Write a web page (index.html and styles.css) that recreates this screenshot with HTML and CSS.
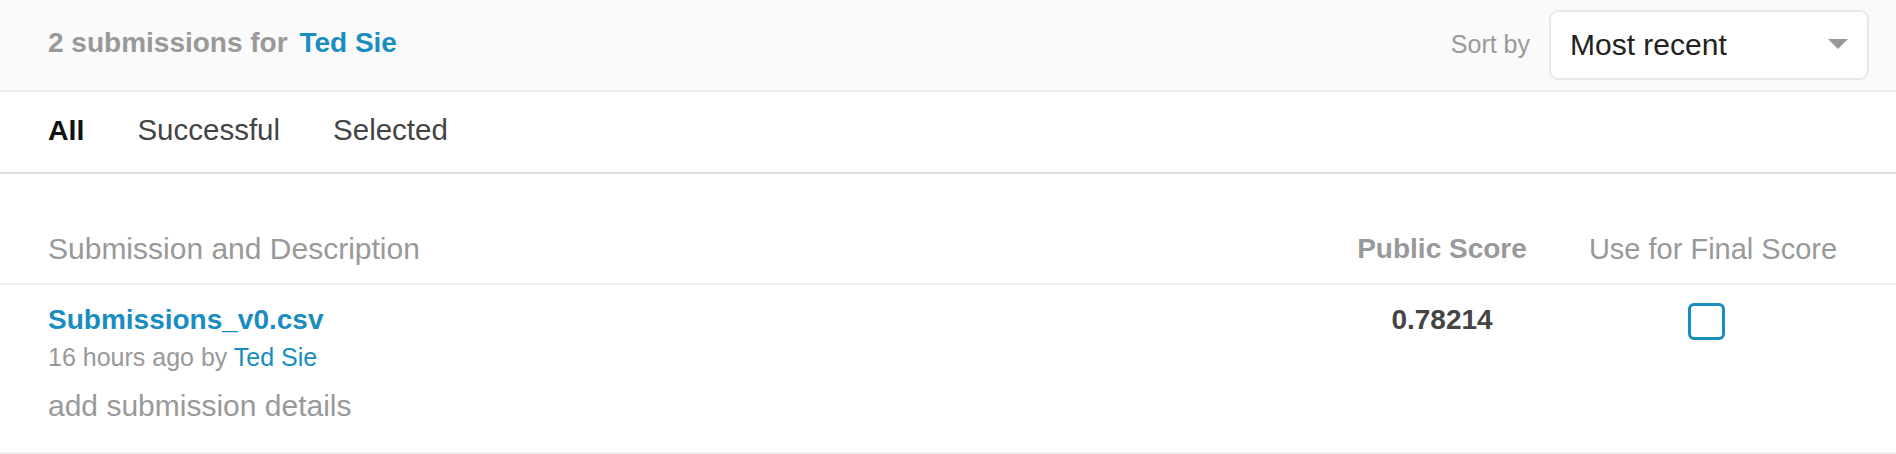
FILE: index.html
```html
<!DOCTYPE html>
<html lang="en">
<head>
<meta charset="utf-8">
<title>Submissions</title>
<link rel="stylesheet" href="styles.css">
</head>
<body>
<header class="sub-header">
  <h1 class="sub-title">2 submissions for <a class="user-link" href="#">Ted Sie</a></h1>
  <div class="sort">
    <span class="sort-label">Sort by</span>
    <div class="select">
      <span class="select-value">Most recent</span>
      <span class="caret"></span>
    </div>
  </div>
</header>
<nav class="tabs">
  <a class="tab tab-active" href="#">All</a>
  <a class="tab" href="#">Successful</a>
  <a class="tab" href="#">Selected</a>
</nav>
<section class="table">
  <div class="row row-head">
    <div class="col-desc">Submission and Description</div>
    <div class="col-score col-score-head">Public Score</div>
    <div class="col-final">Use for Final Score</div>
  </div>
  <div class="row row-item">
    <div class="col-desc">
      <a class="file-link" href="#">Submissions_v0.csv</a>
      <div class="meta">16 hours ago by <a class="user-link-plain" href="#">Ted Sie</a></div>
      <div class="details">add submission details</div>
    </div>
    <div class="col-score score-value">0.78214</div>
    <div class="col-final"><span class="checkbox"></span></div>
  </div>
</section>
</body>
</html>
```
FILE: styles.css
```css
* { box-sizing: border-box; }
html, body { margin: 0; padding: 0; background: #fff; }
body { font-family: "Liberation Sans", Arial, sans-serif; color: #444; }
a { text-decoration: none; }

.sub-header {
  height: 92px;
  background: #fafafa;
  border-bottom: 2px solid #ebebeb;
  display: flex;
  align-items: center;
  justify-content: space-between;
  padding: 0 27px 4px 48px;
}
.sub-title {
  margin: 0;
  font-size: 28px;
  font-weight: 700;
  color: #999;
  line-height: 32px;
}
.user-link { color: #1a8dc0; margin-left: 4px; }
.sort { display: flex; align-items: center; gap: 19px; }
.sort-label { font-size: 25px; color: #999; line-height: 30px; padding-top: 2px; }
.select {
  width: 320px;
  height: 70px;
  background: #fff;
  border: 2px solid #e8e8e8;
  border-radius: 9px;
  display: flex;
  align-items: center;
  justify-content: space-between;
  padding: 0 19px 0 19px;
  margin-top: 4px;
}
.select-value { font-size: 30px; color: #222; line-height: 34px; }
.caret {
  width: 0; height: 0;
  border-left: 10px solid transparent;
  border-right: 10px solid transparent;
  border-top: 10px solid #999;
  margin-top: -2px;
}

.tabs {
  display: flex;
  gap: 53px;
  padding: 22px 48px 26px;
  border-bottom: 2px solid #dedede;
  height: 82px;
}
.tab { font-size: 29.5px; line-height: 32px; color: #444; }
.tab-active { color: #111; font-weight: 700; font-size: 28.5px; }

.table { padding-top: 58px; }
.row {
  display: grid;
  grid-template-columns: 1fr 252px 290px;
  padding: 0 38px 0 48px;
  border-bottom: 2px solid #eee;
}
.row-head { padding-bottom: 17px; line-height: 34px; color: #999; }
.row-head .col-desc { font-size: 30px; }
.col-score { text-align: center; }
.col-final { text-align: center; }
.col-score-head { font-size: 28px; font-weight: 700; }
.row-head .col-final { font-size: 29px; }

.row-item { padding-top: 19px; padding-bottom: 29px; }
.file-link {
  display: block;
  font-size: 28px;
  font-weight: 700;
  line-height: 32px;
  color: #1a8dc0;
}
.meta { margin-top: 6px; font-size: 25px; line-height: 30px; color: #999; }
.user-link-plain { color: #1a8dc0; }
.details { margin-top: 17px; font-size: 30px; line-height: 34px; color: #999; }
.score-value { font-size: 28px; font-weight: 700; line-height: 32px; color: #444; }
.checkbox {
  display: inline-block;
  width: 37px;
  height: 37px;
  border: 3px solid #1a8dc0;
  border-radius: 6px;
  margin-top: -1px;
  margin-right: 14px;
}
```
